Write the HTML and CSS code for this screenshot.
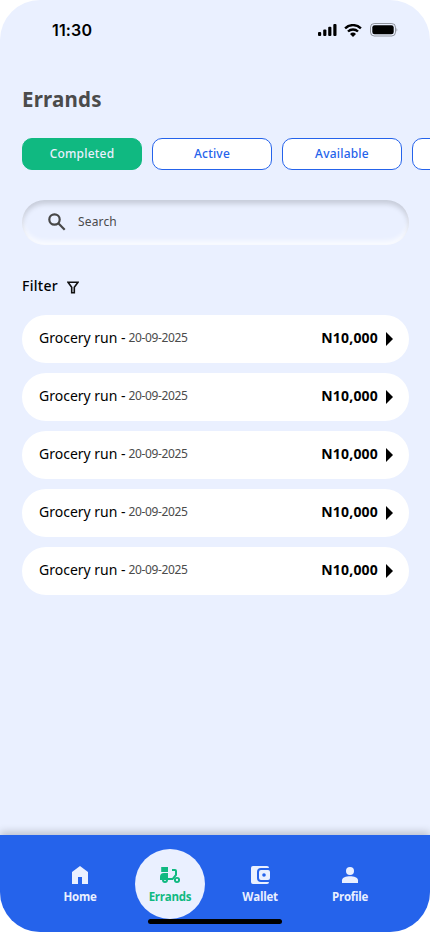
FILE: index.html
```html
<!DOCTYPE html>
<html lang="en">
<head>
<meta charset="utf-8">
<meta name="viewport" content="width=device-width, initial-scale=1">
<title>Errands</title>
<link rel="stylesheet" href="styles.css">
</head>
<body>
<div class="screen">
  <header class="status">
    <span class="time">11:30</span>
    <div class="indicators">
      <svg width="19" height="12" viewBox="0 0 19 12"><rect x="0" y="8" width="3.2" height="4" rx="1"/><rect x="5.2" y="5.5" width="3.2" height="6.5" rx="1"/><rect x="10.2" y="2.8" width="3.2" height="9.2" rx="1"/><rect x="15.3" y="0" width="3.2" height="12" rx="1"/></svg>
      <svg class="wifi" width="18" height="13" viewBox="0 0 18 13"><g fill="none" stroke="#000" stroke-width="2.4"><path d="M1.1 4.3a11.4 11.4 0 0 1 15.8 0"/><path d="M4 7.5a7.2 7.2 0 0 1 10 0"/></g><path d="M6 9.9a4.4 4.4 0 0 1 6 0l-3 3z"/></svg>
      <svg class="battery" width="28" height="14" viewBox="0 0 28 14"><rect x=".5" y=".5" width="25" height="12.5" rx="3.8" fill="none" stroke="#000" stroke-opacity=".38"/><rect x="2.3" y="2.2" width="21.4" height="9.1" rx="2.3"/><path d="M26.5 4.7q1.5 2 0 4z" opacity=".4"/></svg>
    </div>
  </header>
  <main class="content">
    <h1 class="title">Errands</h1>
    <nav class="tabs">
      <span class="tab tab-on">Completed</span>
      <span class="tab">Active</span>
      <span class="tab">Available</span>
      <span class="tab"></span>
    </nav>
    <div class="search">
      <svg width="18" height="18" viewBox="0 0 18 18" fill="none" stroke="#484848" stroke-width="2.2"><circle cx="6.5" cy="6.5" r="5.2"/><path d="M10.3 10.3l6.4 6.4"/></svg>
      <span class="search-label">Search</span>
    </div>
    <div class="filter">
      <span class="filter-label">Filter</span>
      <svg width="12" height="13" viewBox="0 0 12 13" fill="none" stroke="#111" stroke-width="1.6"><path d="M1 1.2h10L7.3 6.2v5.5H4.7V6.2z"/></svg>
    </div>
    <ul class="list">
      <li class="row"><span class="name">Grocery run -</span><span class="date">20-09-2025</span><span class="amount">N10,000</span><svg width="7" height="14" viewBox="0 0 7 14"><path d="M0 0l7 7-7 7z"/></svg></li>
      <li class="row"><span class="name">Grocery run -</span><span class="date">20-09-2025</span><span class="amount">N10,000</span><svg width="7" height="14" viewBox="0 0 7 14"><path d="M0 0l7 7-7 7z"/></svg></li>
      <li class="row"><span class="name">Grocery run -</span><span class="date">20-09-2025</span><span class="amount">N10,000</span><svg width="7" height="14" viewBox="0 0 7 14"><path d="M0 0l7 7-7 7z"/></svg></li>
      <li class="row"><span class="name">Grocery run -</span><span class="date">20-09-2025</span><span class="amount">N10,000</span><svg width="7" height="14" viewBox="0 0 7 14"><path d="M0 0l7 7-7 7z"/></svg></li>
      <li class="row"><span class="name">Grocery run -</span><span class="date">20-09-2025</span><span class="amount">N10,000</span><svg width="7" height="14" viewBox="0 0 7 14"><path d="M0 0l7 7-7 7z"/></svg></li>
    </ul>
  </main>
  <nav class="bottom">
    <a class="item"><svg width="24" height="24" viewBox="0 0 24 24"><path d="M4 21V9l8-6 8 6v12h-6v-7h-4v7z"/></svg><span>Home</span></a>
    <a class="item item-on"><svg width="24" height="24" viewBox="0 0 24 24"><path d="M3.2 4h6.8v5H3.2zM6 10h4v5h4.2L17 11.6V8h-3V6h3a2 2 0 0 1 2 2v4.3L15 17h-5a3 3 0 0 1-6 0H2v-3a4 4 0 0 1 4-4zm0 7a1 1 0 0 0 2 0z"/><circle cx="19" cy="17" r="2.1" fill="none" stroke="currentColor" stroke-width="1.9"/></svg><span>Errands</span></a>
    <a class="item"><svg width="24" height="24" viewBox="0 0 24 24"><path d="M5 3h14a2 2 0 0 1 2 2h-8a4 4 0 0 0-4 4v6a4 4 0 0 0 4 4h8a2 2 0 0 1-2 2H5a2 2 0 0 1-2-2V5a2 2 0 0 1 2-2z"/><path fill-rule="evenodd" d="M13 7h7a2 2 0 0 1 2 2v6a2 2 0 0 1-2 2h-7a2 2 0 0 1-2-2V9a2 2 0 0 1 2-2zM16 10.2a1.8 1.8 0 1 0 0 3.6 1.8 1.8 0 0 0 0-3.6z"/></svg><span>Wallet</span></a>
    <a class="item"><svg width="24" height="24" viewBox="0 0 24 24"><circle cx="12" cy="8" r="4"/><path d="M4 20v-2.8C4 14.7 8 13.3 12 13.3s8 1.4 8 3.9V20z"/></svg><span>Profile</span></a>
    <div class="handle"></div>
  </nav>
</div>
</body>
</html>
```
FILE: styles.css
```css
* { box-sizing: border-box; }
body { margin: 0; background: #fff; font-family: "Noto Sans", sans-serif; }
svg { display: block; flex: none; }
.screen { width: 430px; height: 932px; display: flex; flex-direction: column; overflow: hidden; background: #eaf0ff; border-radius: 40px; }
.status { height: 60px; flex: none; display: flex; align-items: center; justify-content: space-between; padding: 0 32px 0 52px; }
.time { font: 600 16px/20px Inter, sans-serif; letter-spacing: .15px; }
.indicators { display: flex; align-items: center; }
.wifi { margin-left: 7px; }
.battery { margin-left: 8px; }
.content { flex: 1; padding: 24px 0 0 22px; }
.title { margin: 0; font-size: 20.5px; line-height: 30px; font-weight: 700; letter-spacing: .2px; color: #4b4b4b; }
.tabs { display: flex; gap: 10px; margin-top: 24px; overflow: hidden; }
.tab { width: 120px; height: 32px; flex: none; border: 1px solid #2563eb; border-radius: 10px; background: #fff; color: #2563eb; font-size: 12px; line-height: 29px; font-weight: 500; letter-spacing: .2px; text-align: center; }
.tab-on { background: #10b981; border-color: #10b981; color: #eaf0ff; }
.search { width: 387px; height: 45px; margin-top: 30px; border-radius: 23px; padding: 0 0 0 26px; display: flex; align-items: center; gap: 12px; box-shadow: inset 0 4px 5px rgba(0,0,0,.15), inset 0 -4px 5px rgba(255,255,255,.75); }
.search svg { margin-top: -1px; }
.search-label { font-size: 12px; line-height: 18px; letter-spacing: .15px; color: #4b4b4b; margin-top: -2px; }
.filter { height: 24px; display: flex; align-items: center; gap: 9px; margin-top: 29px; }
.filter svg { margin-top: 3px; }
.filter-label { font-size: 14px; line-height: 24px; font-weight: 500; letter-spacing: .3px; margin-top: -1px; }
.list { width: 387px; list-style: none; margin: 17px 0 0; padding: 0; display: flex; flex-direction: column; gap: 10px; }
.row { height: 48px; border-radius: 24px; background: #fff; padding: 0 16px 0 17px; display: flex; align-items: center; }
.name { font-size: 14px; line-height: 20px; margin-top: -3px; white-space: nowrap; }
.date { font-size: 12px; line-height: 20px; letter-spacing: -.38px; margin: -2px 0 0 3px; color: #4b4b4b; }
.amount { font-size: 14px; line-height: 20px; font-weight: 700; letter-spacing: .2px; margin: -3px 8px 0 auto; }
.bottom { position: relative; height: 97px; flex: none; display: flex; justify-content: center; gap: 20px; padding-top: 14px; background: #2563eb; box-shadow: 0 -3px 8px rgba(0,0,0,.2); }
.item { width: 70px; height: 70px; border-radius: 50%; padding-top: 14px; display: flex; flex-direction: column; align-items: center; color: #eaf0ff; font: 700 11.5px/18px "Open Sans", sans-serif; letter-spacing: -.25px; }
.item svg { fill: currentColor; }
.item span { margin-top: 1px; }
.item-on { background: #eaf0ff; color: #10b981; }
.handle { position: absolute; left: 148px; bottom: 8px; width: 134px; height: 5px; border-radius: 3px; background: #000; }
```
